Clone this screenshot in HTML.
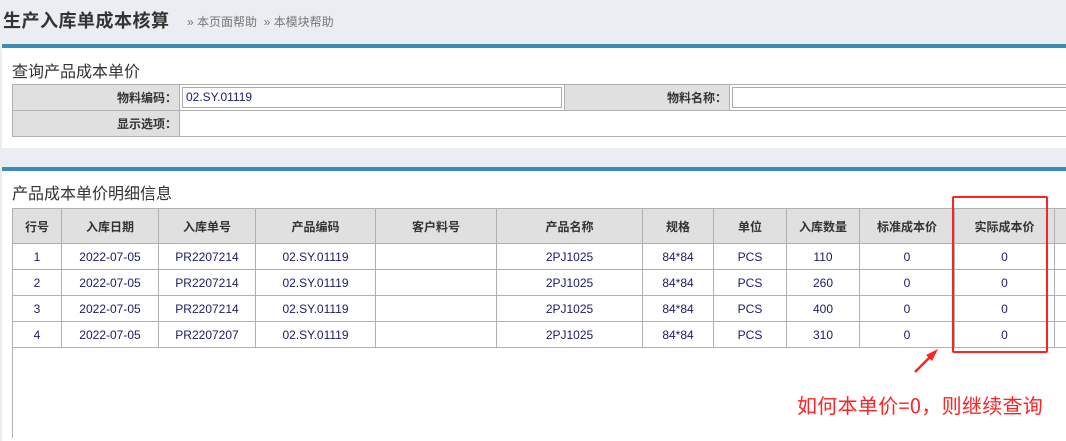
<!DOCTYPE html><html><head><meta charset="utf-8"><style>
body{margin:0;width:1066px;height:426px;overflow:hidden;background:#eaedf2;font-family:"Liberation Sans","Noto Sans CJK SC",sans-serif;position:relative}
.abs{position:absolute}
.title{left:3px;top:7px;font-size:18px;font-weight:bold;color:#333;letter-spacing:0.5px}
.help{left:187px;top:13px;font-size:12px;color:#777}
.panel{background:#fff;border-top:4px solid #3c8db4;left:2px;width:1070px}
.ptitle{font-size:16px;color:#333}
table{border-collapse:collapse;position:absolute;table-layout:fixed}
td{border:1px solid #b0b0b0;font-size:12px;padding:0}
.lab{background:#e0e0e0;text-align:right;font-weight:bold;color:#333;padding-right:2px}
.inp{border:1px solid #aaa;height:19px;margin:2px;font-size:12px;color:#1a1a7a;line-height:19px;padding-left:3px}
.t2 td{text-align:center;color:#1a1a6a;height:25px}
.t2 tr.h td{background:#e0e0e0;font-weight:bold;color:#333;height:34px}
</style></head><body>
<div class="abs title">生产入库单成本核算</div>
<div class="abs help">» 本页面帮助 &nbsp;» 本模块帮助</div>
<div class="abs panel" style="top:44px;height:100px"></div>
<div class="abs ptitle" style="left:12px;top:58px">查询产品成本单价</div>
<table style="left:12px;top:84px;width:1070px">
<colgroup><col style="width:167px"><col style="width:385px"><col style="width:165px"><col></colgroup>
<tr style="height:26px"><td class="lab">物料编码：</td><td><div class="inp">02.SY.01119</div></td><td class="lab">物料名称：</td><td><div class="inp" style="margin-right:0"></div></td></tr>
<tr style="height:26px"><td class="lab">显示选项：</td><td colspan="3"></td></tr>
</table>
<div class="abs panel" style="top:167px;height:270px"></div>
<div class="abs ptitle" style="left:12px;top:180px">产品成本单价明细信息</div>
<div class="abs" style="left:12px;top:208px;width:1px;height:230px;background:#b0b0b0"></div>
<table class="t2" style="left:12px;top:208px;width:1090px">
<colgroup><col style="width:49px"><col style="width:97px"><col style="width:97px"><col style="width:120px"><col style="width:121px"><col style="width:146px"><col style="width:71px"><col style="width:73px"><col style="width:73px"><col style="width:95px"><col style="width:100px"><col></colgroup>
<tr class="h"><td>行号</td><td>入库日期</td><td>入库单号</td><td>产品编码</td><td>客户料号</td><td>产品名称</td><td>规格</td><td>单位</td><td>入库数量</td><td>标准成本价</td><td>实际成本价</td><td>标</td></tr>
<tr><td>1</td><td>2022-07-05</td><td>PR2207214</td><td>02.SY.01119</td><td></td><td>2PJ1025</td><td>84*84</td><td>PCS</td><td>110</td><td>0</td><td>0</td><td></td></tr>
<tr><td>2</td><td>2022-07-05</td><td>PR2207214</td><td>02.SY.01119</td><td></td><td>2PJ1025</td><td>84*84</td><td>PCS</td><td>260</td><td>0</td><td>0</td><td></td></tr>
<tr><td>3</td><td>2022-07-05</td><td>PR2207214</td><td>02.SY.01119</td><td></td><td>2PJ1025</td><td>84*84</td><td>PCS</td><td>400</td><td>0</td><td>0</td><td></td></tr>
<tr><td>4</td><td>2022-07-05</td><td>PR2207207</td><td>02.SY.01119</td><td></td><td>2PJ1025</td><td>84*84</td><td>PCS</td><td>310</td><td>0</td><td>0</td><td></td></tr>
</table>
<div class="abs" style="left:952px;top:196px;width:92px;height:153px;border:2px solid #f22;border-radius:2px"></div>
<svg class="abs" style="left:910px;top:345px" width="32" height="32"><line x1="5" y1="27" x2="24" y2="8" stroke="#f22" stroke-width="2.5"/><polygon points="28,4 16,10 22,16" fill="#f22"/></svg>
<div class="abs" style="left:797px;top:390px;font-size:20px;color:#f22;font-family:'Noto Sans CJK SC',sans-serif;letter-spacing:0.3px">如何本单价=0，则继续查询</div>
</body></html>
